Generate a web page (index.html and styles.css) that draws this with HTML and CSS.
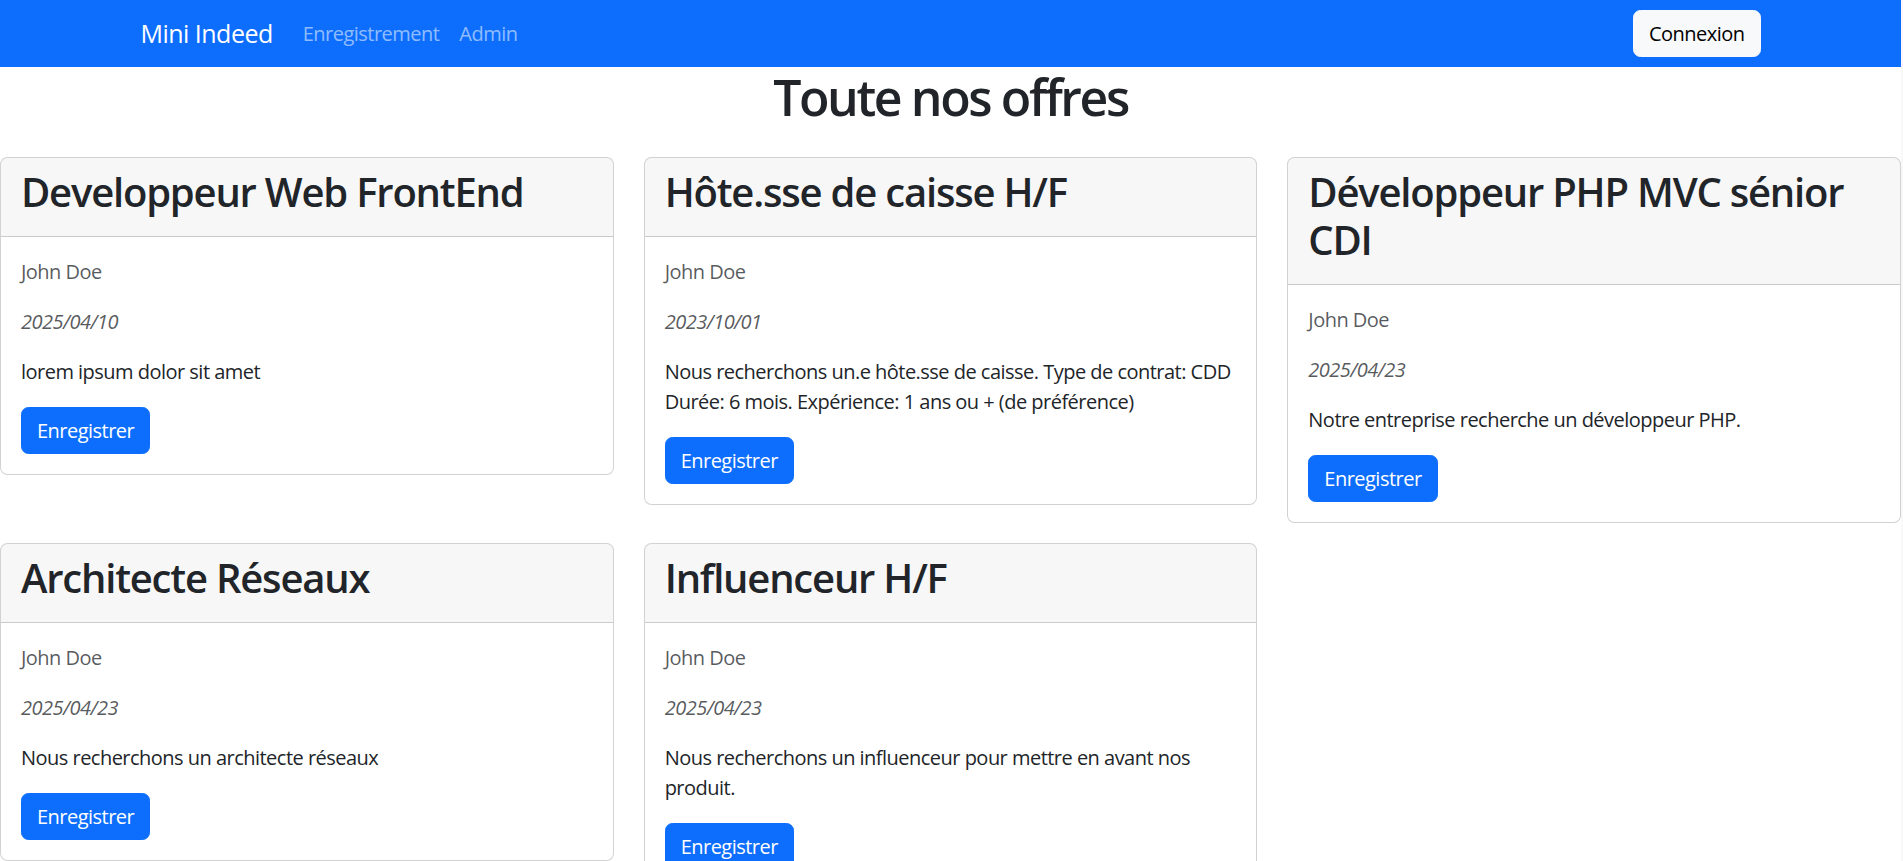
FILE: index.html
```html
<!DOCTYPE html>
<html lang="fr">
<head>
<meta charset="utf-8">
<title>Mini Indeed</title>
<link rel="stylesheet" href="styles.css">
</head>
<body>
<nav class="navbar">
  <div class="nav-inner">
    <a class="brand" href="#">Mini Indeed</a>
    <ul class="nav-links">
      <li><a href="#">Enregistrement</a></li>
      <li><a href="#">Admin</a></li>
    </ul>
    <a class="btn-login" href="#">Connexion</a>
  </div>
</nav>
<main>
  <h1 class="page-title">Toute nos offres</h1>
  <div class="offers">
    <article class="card">
      <div class="card-header"><h2 class="card-title">Developpeur Web FrontEnd</h2></div>
      <div class="card-body">
        <p class="author">John Doe</p>
        <p class="date">2025/04/10</p>
        <p class="desc">lorem ipsum dolor sit amet</p>
        <a class="btn-primary" href="#">Enregistrer</a>
      </div>
    </article>
    <article class="card">
      <div class="card-header"><h2 class="card-title">Hôte.sse de caisse H/F</h2></div>
      <div class="card-body">
        <p class="author">John Doe</p>
        <p class="date">2023/10/01</p>
        <p class="desc">Nous recherchons un.e hôte.sse de caisse. Type de contrat: CDD<br>Durée: 6 mois. Expérience: 1 ans ou + (de préférence)</p>
        <a class="btn-primary" href="#">Enregistrer</a>
      </div>
    </article>
    <article class="card">
      <div class="card-header"><h2 class="card-title">Développeur PHP MVC sénior CDI</h2></div>
      <div class="card-body">
        <p class="author">John Doe</p>
        <p class="date">2025/04/23</p>
        <p class="desc">Notre entreprise recherche un développeur PHP.</p>
        <a class="btn-primary" href="#">Enregistrer</a>
      </div>
    </article>
    <article class="card">
      <div class="card-header"><h2 class="card-title">Architecte Réseaux</h2></div>
      <div class="card-body">
        <p class="author">John Doe</p>
        <p class="date">2025/04/23</p>
        <p class="desc">Nous recherchons un architecte réseaux</p>
        <a class="btn-primary" href="#">Enregistrer</a>
      </div>
    </article>
    <article class="card">
      <div class="card-header"><h2 class="card-title">Influenceur H/F</h2></div>
      <div class="card-body">
        <p class="author">John Doe</p>
        <p class="date">2025/04/23</p>
        <p class="desc">Nous recherchons un influenceur pour mettre en avant nos produit.</p>
        <a class="btn-primary" href="#">Enregistrer</a>
      </div>
    </article>
  </div>
</main>
</body>
</html>
```
FILE: styles.css
```css
html {
  background: #f8f8f8;
  scrollbar-width: none;
}
html::-webkit-scrollbar { display: none; }

body {
  margin: 0 2px 0 0;
  min-height: 100vh;
  background: #fff;
  font-family: "Open Sans", "Segoe UI", sans-serif;
  font-size: 20px;
  line-height: 1.5;
  color: #212529;
  letter-spacing: -0.026em;
}

a { text-decoration: none; }

.navbar {
  background: #0d6efd;
  padding: 10px 0;
}

.nav-inner {
  max-width: 1650px;
  margin: 0 auto;
  padding: 0 15px;
  box-sizing: border-box;
  display: flex;
  align-items: center;
}

.brand {
  font-size: 25px;
  line-height: 37.5px;
  margin-right: 20px;
  color: #fff;
}

.nav-links {
  display: flex;
  list-style: none;
  margin: 0;
  padding: 0;
  flex: 1;
}

.nav-links a {
  display: block;
  padding: 5px 10px;
  color: rgba(255, 255, 255, 0.55);
}

.btn-login {
  display: inline-block;
  padding: 7.5px 15px;
  line-height: 30px;
  background: #f8f9fa;
  border: 1px solid #f8f9fa;
  border-radius: 7.5px;
  color: #000;
}

.page-title {
  margin: 0;
  font-size: 50px;
  font-weight: 600;
  line-height: 1.2;
  letter-spacing: -0.048em;
  text-align: center;
}

.offers {
  display: grid;
  grid-template-columns: repeat(3, 1fr);
  column-gap: 30px;
  row-gap: 20px;
  align-items: start;
  margin-top: 30px;
}

.card {
  border: 1px solid rgba(0, 0, 0, 0.175);
  border-radius: 7.5px;
  background: #fff;
  overflow: hidden;
}

.card-header {
  padding: 10px 20px;
  background: rgba(0, 0, 0, 0.03);
  border-bottom: 1px solid rgba(0, 0, 0, 0.175);
}

.card-title {
  margin: 0 0 10px;
  font-size: 40px;
  font-weight: 600;
  line-height: 1.2;
  letter-spacing: -0.03em;
}

.card-body {
  padding: 20px;
}

.card-body p {
  margin: 0 0 20px;
}

.author,
.date {
  color: rgba(33, 37, 41, 0.75);
}

.date {
  font-style: italic;
}

.btn-primary {
  display: inline-block;
  padding: 7.5px 15px;
  line-height: 30px;
  background: #0d6efd;
  border: 1px solid #0d6efd;
  border-radius: 7.5px;
  color: #fff;
}
```
